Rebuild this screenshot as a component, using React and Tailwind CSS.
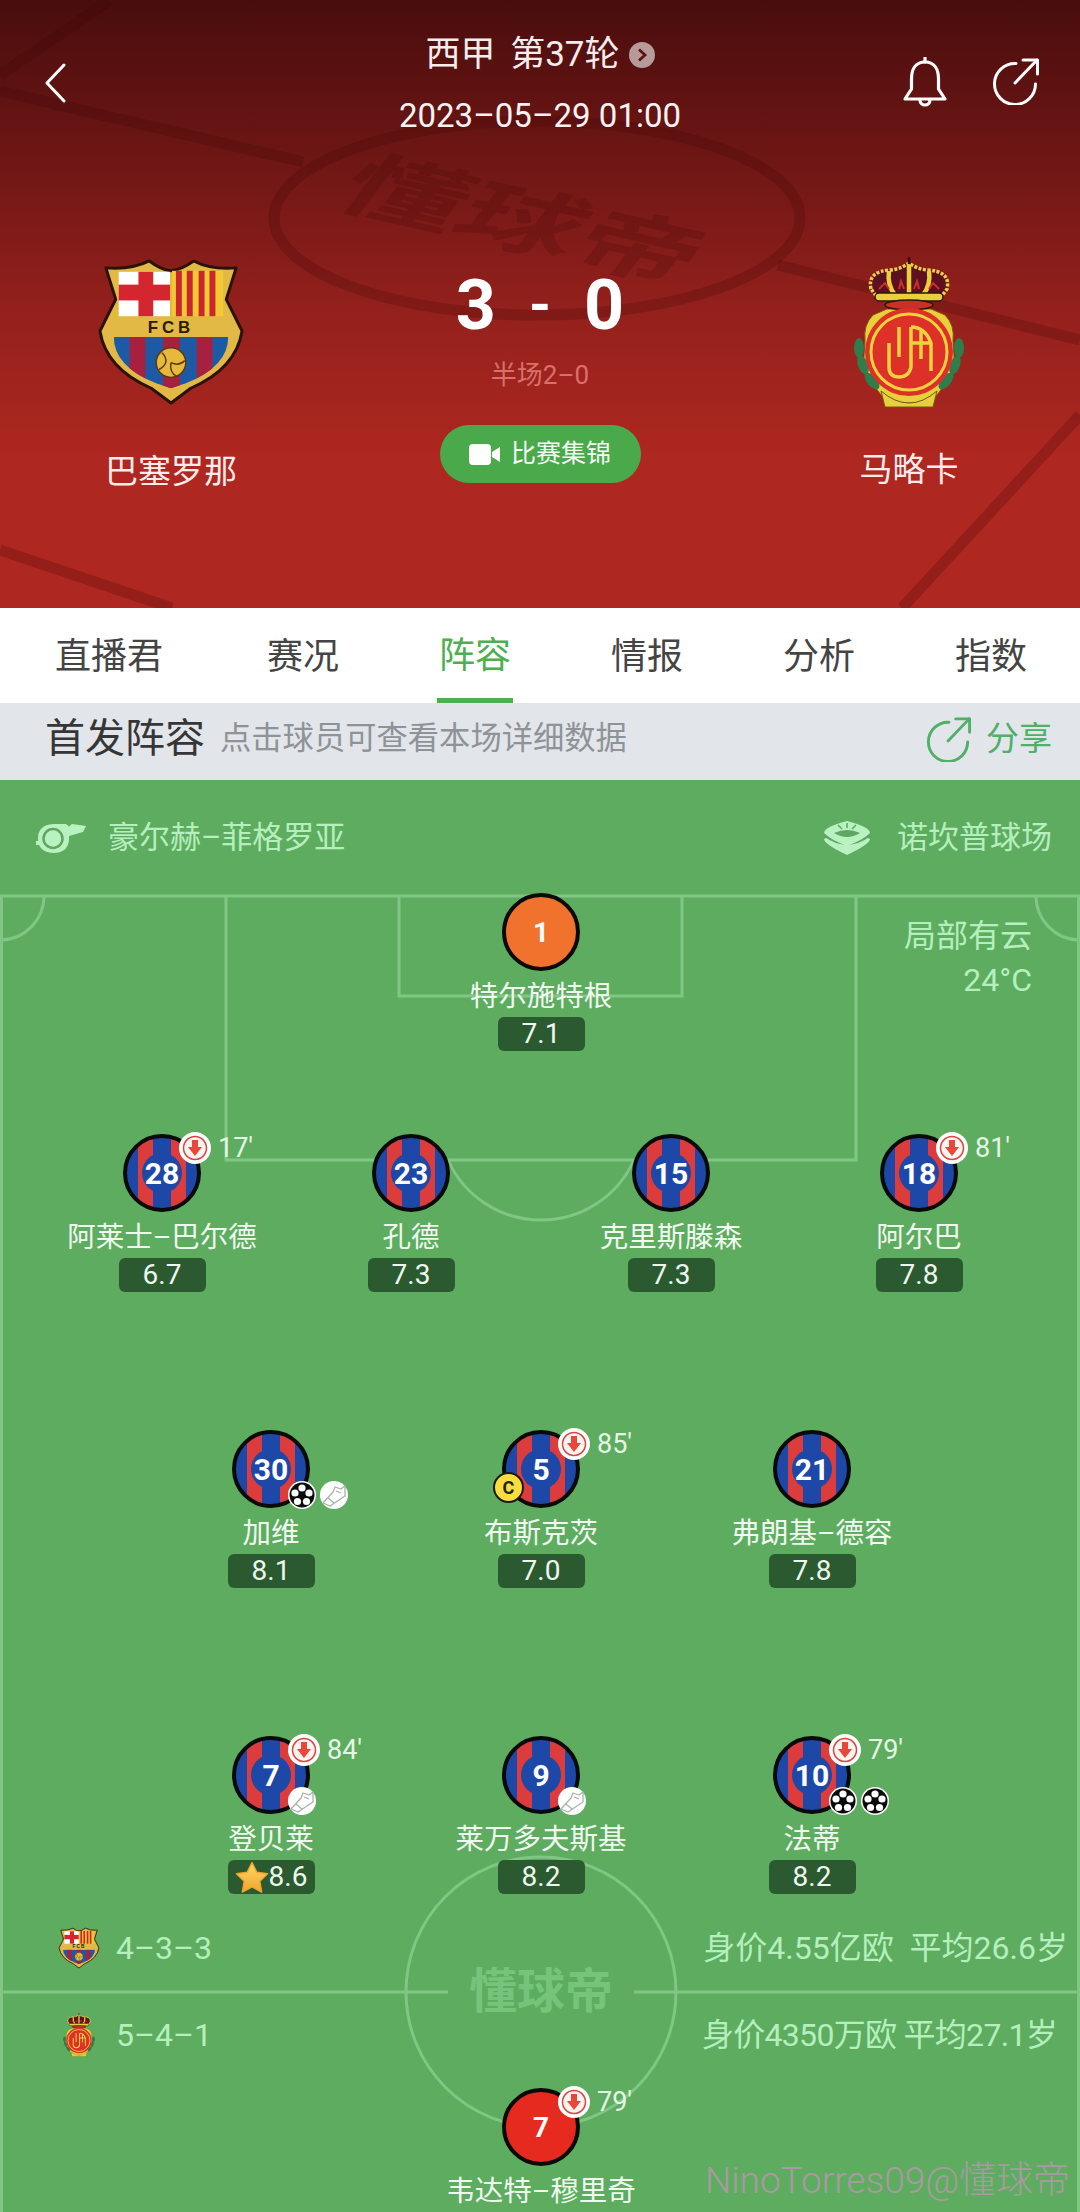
import React from "react";

function BarcaCrest({ className, id }) {
  return (
    <svg viewBox="14 17 152 151" className={className}>
      <defs>
        <clipPath id={id}>
          <path d="M32 98H148Q148 128 105 145L90 150L75 145Q32 128 32 98Z" />
        </clipPath>
      </defs>
      <path d="M24 28Q50 30 68 21Q80 30 90 31Q100 30 113 21Q130 30 156 28L146 60L162 92Q156 130 110 150L90 165L70 150Q24 130 18 92L34 60Z" fill="#e2b945" stroke="#2a1208" strokeWidth="3" strokeLinejoin="round" />
      <rect x="37" y="32" width="52" height="45" fill="#fff" />
      <rect x="57" y="32" width="15" height="45" fill="#d4262e" />
      <rect x="37" y="45" width="52" height="16" fill="#d4262e" />
      <rect x="91" y="31" width="52" height="46" fill="#f2c935" />
      <rect x="95" y="31" width="6" height="46" fill="#c9272e" />
      <rect x="106" y="31" width="6" height="46" fill="#c9272e" />
      <rect x="118" y="31" width="6" height="46" fill="#c9272e" />
      <rect x="129" y="31" width="6" height="46" fill="#c9272e" />
      <text x="90" y="94" textAnchor="middle" fontSize="17" fontWeight="700" fill="#2a1a08" letterSpacing="4" fontFamily="Liberation Sans, sans-serif">FCB</text>
      <g clipPath={`url(#${id})`}>
        <rect x="32" y="98" width="116" height="55" fill="#1d5aa6" />
        <rect x="48" y="98" width="16" height="55" fill="#a8203f" />
        <rect x="82" y="98" width="17" height="55" fill="#a8203f" />
        <rect x="116" y="98" width="16" height="55" fill="#a8203f" />
      </g>
      <circle cx="90" cy="124" r="15" fill="#e6b93c" stroke="#5b3a10" strokeWidth="1.5" />
      <path d="M81 114Q90 124 78 131M90 124Q98 128 104 122M90 124Q88 134 96 138" fill="none" stroke="#5b3a10" strokeWidth="1.5" />
    </svg>
  );
}

function MallorcaCrest({ className }) {
  return (
    <svg viewBox="22 14 116 152" className={className}>
      <path d="M36 98Q34 82 44 72L58 66H102L116 72Q126 82 124 98L126 128L102 160H58L34 128Z" fill="#e9cf3c" stroke="#7a5a12" strokeWidth="1" />
      <g fill="#2f7d4a">
        <ellipse cx="30" cy="105" rx="5" ry="10" />
        <ellipse cx="34" cy="122" rx="5" ry="10" transform="rotate(-20 34 122)" />
        <ellipse cx="43" cy="138" rx="5" ry="10" transform="rotate(-40 43 138)" />
        <ellipse cx="130" cy="105" rx="5" ry="10" />
        <ellipse cx="126" cy="122" rx="5" ry="10" transform="rotate(20 126 122)" />
        <ellipse cx="117" cy="138" rx="5" ry="10" transform="rotate(40 117 138)" />
      </g>
      <path d="M52 148Q80 172 108 148L104 164H56Z" fill="#e9cf3c" stroke="#6d5a12" strokeWidth="1" />
      <path d="M42 46Q38 28 62 27Q72 26 80 20Q88 26 98 27Q122 28 118 46L112 54H48Z" fill="#5c1020" stroke="#e8cf4c" strokeWidth="3.5" strokeDasharray="3 1.5" />
      <path d="M80 22V52M60 28Q58 42 66 52M100 28Q102 42 94 52" stroke="#e9cf3c" strokeWidth="4.5" fill="none" />
      <path d="M80 13V21" stroke="#3a0b10" strokeWidth="2.5" />
      <path d="M50 46L56 40L60 46M110 46L104 40L100 46M70 46L72 38L75 46M90 46L88 38L85 46" stroke="#c9302a" strokeWidth="2" fill="none" />
      <rect x="46" y="50" width="68" height="8" rx="4" fill="#e9cf3c" stroke="#2c1a08" strokeWidth="1.5" />
      <ellipse cx="80" cy="62" rx="24" ry="5" fill="#c9302a" stroke="#2c1a08" strokeWidth="1.5" />
      <circle cx="80" cy="109" r="44" fill="#dc3029" />
      <circle cx="80" cy="109" r="38" fill="none" stroke="#f0d23e" strokeWidth="3" />
      <path d="M60 100V124Q60 134 70 134T82 124V84M82 84Q96 84 102 100V128M70 84V114M92 88V116M82 100H102" fill="none" stroke="#f0d23e" strokeWidth="3.5" />
    </svg>
  );
}

function BackIcon() {
  return (
    <svg viewBox="0 0 21 40" className="w-[21px] h-[40px]" fill="none" stroke="#fff" strokeWidth="3" strokeLinecap="round" strokeLinejoin="round">
      <path d="M19 2L2 20L19 38" />
    </svg>
  );
}

function BellIcon() {
  return (
    <svg viewBox="0 0 46 50" className="w-[46px] h-[50px]" fill="none" stroke="#fff" strokeWidth="3.2" strokeLinejoin="round">
      <path d="M23 5C13 5 9.5 13 9.5 22V32L3 42H43L36.500 32V22C36.500 13 33 5 23 5Z" />
      <path d="M23 1V5" strokeLinecap="round" />
      <path d="M18 43A5 5 0 0 0 28 43" />
    </svg>
  );
}

function ShareIcon({ className, color }) {
  return (
    <svg viewBox="0 0 48 48" className={className} fill="none" stroke={color} strokeWidth="3" strokeLinecap="round" strokeLinejoin="round">
      <path d="M24 6.500A20.500 20.500 0 1 0 43.500 27" />
      <path d="M23 26L45 3" />
      <path d="M31 3H45.500V17" />
    </svg>
  );
}

function WhistleIcon() {
  return (
    <svg viewBox="0 0 50 32" className="w-[50px] h-[32px]">
      <path d="M17 2H30L33 4.500L36 2L50 4L47 10L33 14Q34 31 17 31Q2 30 2 16.500Q2 3 17 2Z" fill="#b9f2c1" />
      <rect x="0" y="19" width="4" height="4" fill="#b9f2c1" />
      <circle cx="17" cy="16.500" r="9.500" fill="#b9f2c1" stroke="#5fa662" strokeWidth="2.500" />
    </svg>
  );
}

function StadiumIcon() {
  return (
    <svg viewBox="0 0 48 36" className="w-[48px] h-[36px]">
      <path d="M1 19Q1 24 24 35Q47 24 47 19L40 16H8Z" fill="#b9f2c1" />
      <path d="M1 15Q24 32 47 15" fill="none" stroke="#5fa662" strokeWidth="2.500" />
      <path d="M24 1Q47 7 47 13Q40 20 24 26Q8 20 1 13Q1 7 24 1Z" fill="#b9f2c1" />
      <path d="M11 13Q24 7 37 13Q24 21 11 13Z" fill="#5fa662" />
      <path d="M15 5L19 9M24 3V8M33 5L29 9" stroke="#5fa662" strokeWidth="1.500" />
    </svg>
  );
}

function VideoIcon() {
  return (
    <svg viewBox="0 0 32 21" className="w-[32px] h-[21px]" fill="#fff">
      <rect x="0" y="0" width="22" height="21" rx="4" />
      <path d="M23 8L31 3V18L23 13Z" />
    </svg>
  );
}

function Jersey({ kind, num }) {
  const isBarca = kind === "barca";
  const fill = kind === "gk" ? "#f0722c" : kind === "red" ? "#e62a20" : "#1e48a8";
  return (
    <svg viewBox="0 0 78 78" className="w-[78px] h-[78px]">
      <defs>
        <clipPath id="jersey-clip">
          <circle cx="39" cy="39" r="37" />
        </clipPath>
      </defs>
      <circle cx="39" cy="39" r="37" fill={fill} />
      {isBarca && (
        <g clipPath="url(#jersey-clip)">
          <rect x="15" y="0" width="15" height="78" fill="#dc3c3c" />
          <rect x="48" y="0" width="15" height="78" fill="#dc3c3c" />
          <circle cx="39" cy="39" r="20" fill="#1e48a8" />
        </g>
      )}
      <circle cx="39" cy="39" r="37" fill="none" stroke="#0a0a0a" strokeWidth="4" />
      <text x="39" y="39" dy="0.36em" textAnchor="middle" fill="#fff" fontSize={isBarca ? 30 : 28} fontWeight="700" fontFamily="Roboto, sans-serif">{num}</text>
    </svg>
  );
}

function SubBadge() {
  return (
    <svg viewBox="0 0 32 32" className="w-[32px] h-[32px]">
      <circle cx="16" cy="16" r="16" fill="#fff" />
      <circle cx="16" cy="16" r="11.500" fill="#fdf4f2" stroke="#d9453a" strokeWidth="1.500" />
      <path d="M13 8H19V15H23L16 24L9 15H13Z" fill="#e8483a" />
    </svg>
  );
}

function BallBadge() {
  return (
    <svg viewBox="0 0 28 28" className="w-[28px] h-[28px]">
      <circle cx="14" cy="14" r="14" fill="#fff" />
      <circle cx="14" cy="14" r="12.500" fill="#0b0b0b" />
      <circle cx="14" cy="7" r="3.600" fill="#fff" />
      <circle cx="7" cy="12" r="3.600" fill="#fff" />
      <circle cx="21" cy="12" r="3.600" fill="#fff" />
      <circle cx="9.500" cy="20.500" r="3.600" fill="#fff" />
      <circle cx="18.500" cy="20.500" r="3.600" fill="#fff" />
    </svg>
  );
}

function BootBadge() {
  return (
    <svg viewBox="0 0 28 28" className="w-[28px] h-[28px]">
      <circle cx="14" cy="14" r="14" fill="#fff" />
      <path d="M3 22L13 11L15 6L21 8L25 5L25 15L10 25Z" fill="#fff" stroke="#a9b0ab" strokeWidth="1.300" strokeLinejoin="round" />
      <path d="M8 17L14 22M16 10L21 12" fill="none" stroke="#a9b0ab" strokeWidth="1.200" />
    </svg>
  );
}

function StarIcon() {
  return (
    <svg viewBox="0 0 34 32" className="w-[34px] h-[32px] shrink-0">
      <defs>
        <linearGradient id="star-fill" x1="0" y1="0" x2="0" y2="1">
          <stop offset="0" stopColor="#fcd96a" />
          <stop offset="1" stopColor="#f2a52c" />
        </linearGradient>
      </defs>
      <path d="M17 1.500L21.800 11.300L32.500 12.800L24.800 20.300L26.600 31L17 25.900L7.400 31L9.200 20.300L1.500 12.800L12.200 11.300Z" fill="url(#star-fill)" stroke="#f2a52c" strokeLinejoin="round" strokeWidth="1.500" />
    </svg>
  );
}

const players = [
  { pos: "left-[441px] top-[113px]", kind: "gk", num: 1, name: "特尔施特根", rating: "7.1" },
  { pos: "left-[62px] top-[354px]", kind: "barca", num: 28, name: "阿莱士–巴尔德", rating: "6.7", sub: "17′" },
  { pos: "left-[311px] top-[354px]", kind: "barca", num: 23, name: "孔德", rating: "7.3" },
  { pos: "left-[571px] top-[354px]", kind: "barca", num: 15, name: "克里斯滕森", rating: "7.3" },
  { pos: "left-[819px] top-[354px]", kind: "barca", num: 18, name: "阿尔巴", rating: "7.8", sub: "81′" },
  { pos: "left-[171px] top-[650px]", kind: "barca", num: 30, name: "加维", rating: "8.1", ball: 1, bootSecond: true },
  { pos: "left-[441px] top-[650px]", kind: "barca", num: 5, name: "布斯克茨", rating: "7.0", sub: "85′", captain: true },
  { pos: "left-[712px] top-[650px]", kind: "barca", num: 21, name: "弗朗基–德容", rating: "7.8" },
  { pos: "left-[171px] top-[956px]", kind: "barca", num: 7, name: "登贝莱", rating: "8.6", sub: "84′", boot: true, star: true },
  { pos: "left-[441px] top-[956px]", kind: "barca", num: 9, name: "莱万多夫斯基", rating: "8.2", boot: true },
  { pos: "left-[712px] top-[956px]", kind: "barca", num: 10, name: "法蒂", rating: "8.2", sub: "79′", ball: 2 },
  { pos: "left-[441px] top-[1308px]", kind: "red", num: 7, name: "韦达特–穆里奇", sub: "79′" },
];

function Player({ p }) {
  return (
    <div className={`absolute w-[200px] flex flex-col items-center ${p.pos}`}>
      <div className="relative w-[78px] h-[78px]">
        <Jersey kind={p.kind} num={p.num} />
        {p.sub && (
          <>
            <span className="absolute left-[56px] top-[-2px]"><SubBadge /></span>
            <span className="absolute left-[95px] top-[-4px] h-[36px] leading-[36px] text-[27px] text-[#e6f6e6] whitespace-nowrap">{p.sub}</span>
          </>
        )}
        {p.ball >= 1 && <span className="absolute left-[56px] top-[51px]"><BallBadge /></span>}
        {p.ball === 2 && <span className="absolute left-[88px] top-[51px]"><BallBadge /></span>}
        {p.boot && <span className="absolute left-[56px] top-[51px]"><BootBadge /></span>}
        {p.bootSecond && <span className="absolute left-[88px] top-[51px]"><BootBadge /></span>}
        {p.captain && (
          <span className="absolute left-[-9px] top-[42px] w-[31px] h-[31px] rounded-full bg-[#f7dd3e] border-2 border-[#1a1a1a] flex items-center justify-center text-[18px] font-bold text-[#222] leading-none">C</span>
        )}
      </div>
      <div className="mt-[6px] h-[40px] leading-[40px] text-[28.5px] text-[#f0f9f0] whitespace-nowrap">{p.name}</div>
      {p.rating && (
        <div className="w-[87px] h-[34px] rounded-[6px] bg-[#2b5a31] flex items-center justify-center text-[28px] leading-none text-[#eef7ee]">
          {p.star && <StarIcon />}
          <span>{p.rating}</span>
        </div>
      )}
    </div>
  );
}

function PitchLines() {
  return (
    <svg viewBox="0 0 1080 1432" className="absolute left-0 top-0 w-[1080px] h-[1432px]" fill="none" stroke="#80c685" strokeWidth="3">
      <path d="M1.500 1432V116H1078.500V1432" />
      <path d="M226 116V380H856V116" />
      <path d="M399 116V216H682V116" />
      <path d="M448 380A102 102 0 0 0 634 380" />
      <path d="M1.500 160A44 44 0 0 0 44 116" />
      <path d="M1078.500 160A44 44 0 0 1 1036 116" />
      <path d="M0 1212H448M634 1212H1080" />
      <circle cx="541" cy="1212" r="135" />
    </svg>
  );
}

function HeaderDecor() {
  return (
    <div className="absolute inset-0 overflow-hidden">
      <svg viewBox="0 0 1080 608" className="absolute left-0 top-0 w-[1080px] h-[608px]" fill="none" stroke="#3c0505" strokeOpacity="0.22" strokeWidth="11">
        <path d="M110 0L0 75" />
        <path d="M0 91L303 162" />
        <path d="M778 265L1080 340" />
        <path d="M1080 415L902 608" />
        <path d="M0 550L172 608" />
        <ellipse cx="537" cy="218" rx="263" ry="97" />
      </svg>
      <div className="absolute left-[312px] top-[152px] w-[420px] text-center text-[120px] leading-[140px] font-bold text-[#3c0505]/20 rotate-[13deg] scale-y-[0.62] skew-x-[-16deg] whitespace-nowrap">懂球帝</div>
    </div>
  );
}

const tabs = ["直播君", "赛况", "阵容", "情报", "分析", "指数"];

export default function App() {
  return (
    <div className="w-[1080px] h-[2212px] overflow-hidden bg-[#5eac60] font-['Roboto','Noto_Sans_CJK_SC',sans-serif]">
      <header className="relative h-[608px] bg-gradient-to-b from-[#490d0d] via-[#92201c] via-50% to-[#ae2720] to-75% text-white">
        <HeaderDecor />
        <div className="relative grid grid-cols-[1fr_auto_1fr] pt-[34px]">
          <div className="pl-[45px] pt-[29px]"><BackIcon /></div>
          <div className="flex flex-col items-center">
            <div className="flex items-center h-[42px] text-[35px] leading-[42px] text-[#f7ecec] [word-spacing:6px]">
              <span>西甲 第37轮</span>
              <span className="ml-[9px] w-[26px] h-[26px] rounded-full bg-[#b79a9a] flex items-center justify-center">
                <svg viewBox="0 0 12 14" className="w-[12px] h-[14px]" fill="none" stroke="#5c1313" strokeWidth="2.800"><path d="M3 1.500L9 7L3 12.500" /></svg>
              </span>
            </div>
            <div className="mt-[19px] h-[42px] text-[33px] leading-[42px] text-[#fbf3f3]">2023–05–29 01:00</div>
          </div>
          <div className="flex justify-end items-start gap-[44px] pr-[40px] pt-[23px]">
            <BellIcon />
            <ShareIcon className="w-[48px] h-[48px]" color="#fff" />
          </div>
        </div>
        <div className="relative grid grid-cols-[342px_396px_342px] mt-[99px]">
          <div className="flex flex-col items-center pt-[21px]">
            <BarcaCrest id="crest-a" className="w-[150px] h-[149px]" />
            <div className="mt-[44px] h-[44px] text-[33px] leading-[44px] text-[#fbecec]">巴塞罗那</div>
          </div>
          <div className="flex flex-col items-center">
            <div className="mt-[24px] h-[90px] flex items-center gap-[33px] text-[70px] leading-[90px] font-bold">
              <span>3</span>
              <span className="text-[56px]">-</span>
              <span>0</span>
            </div>
            <div className="mt-[7px] h-[36px] text-[26px] leading-[36px] text-[#d8716a]">半场2–0</div>
            <div className="mt-[32px] w-[201px] h-[58px] rounded-full bg-[#4aa94a] flex items-center justify-center gap-[10px] text-[25px] text-[#f6fbf6]">
              <VideoIcon />
              <span>比赛集锦</span>
            </div>
          </div>
          <div className="flex flex-col items-center pt-[21px]">
            <MallorcaCrest className="w-[116px] h-[152px]" />
            <div className="mt-[39px] h-[44px] text-[33px] leading-[44px] text-[#fbecec]">马略卡</div>
          </div>
        </div>
      </header>

      <nav className="h-[95px] bg-white flex pl-[55px] text-[36px] text-[#444]">
        {tabs.map((t, i) => (
          <div
            key={t}
            className={
              i === 2
                ? "shrink-0 whitespace-nowrap h-full flex items-center -ml-[2px] px-[2px] mr-[98px] text-[#4caf50] border-b-[5px] border-[#4caf50] pt-[6px]"
                : i === 0
                ? "shrink-0 whitespace-nowrap h-full flex items-center mr-[104px] pt-[3px]"
                : "shrink-0 whitespace-nowrap h-full flex items-center mr-[100px] pt-[3px]"
            }
          >
            {t}
          </div>
        ))}
      </nav>

      <div className="h-[77px] bg-[#e2e5e9] flex items-center pl-[45px] pr-[28px] pb-[6px]">
        <span className="text-[40px] leading-none text-[#363636]">首发阵容</span>
        <span className="ml-[15px] text-[31.3px] leading-none text-[#8e9398]">点击球员可查看本场详细数据</span>
        <span className="ml-auto flex items-center gap-[14px] text-[33px] leading-none text-[#4fb069]">
          <ShareIcon className="w-[46px] h-[46px]" color="#4fb069" />
          <span>分享</span>
        </span>
      </div>

      <main className="relative h-[1432px] overflow-hidden text-[#b6efbe]">
        <PitchLines />
        <div className="relative h-[116px] flex items-center justify-between pl-[36px] pr-[28px] text-[31px]">
          <div className="flex items-center gap-[22px]">
            <WhistleIcon />
            <span>豪尔赫–菲格罗亚</span>
          </div>
          <div className="flex items-center gap-[26px]">
            <StadiumIcon />
            <span>诺坎普球场</span>
          </div>
        </div>
        <div className="relative pr-[48px] pt-[18px] flex flex-col items-end text-[32px] leading-[44px]">
          <span>局部有云</span>
          <span>24°C</span>
        </div>
        <div className="relative mt-[924px] pl-[58px] pr-[12px] flex items-center h-[44px] text-[32px]">
          <BarcaCrest id="crest-b" className="w-[42px] h-[42px]" />
          <span className="ml-[16px]">4–3–3</span>
          <span className="ml-auto whitespace-pre">身价4.55亿欧  平均26.6岁</span>
        </div>
        <div className="relative mt-[43px] pl-[62px] pr-[23px] flex items-center h-[44px] text-[32px]">
          <MallorcaCrest className="w-[34px] h-[44px]" />
          <span className="ml-[20px]">5–4–1</span>
          <span className="ml-auto whitespace-pre tracking-[-0.7px]">身价4350万欧 平均27.1岁</span>
        </div>
        <div className="absolute left-[441px] top-[1182px] w-[200px] text-center text-[48px] leading-[60px] font-bold text-[#76c47b]">懂球帝</div>
        {players.map((p) => (
          <Player key={p.name} p={p} />
        ))}
        <div className="absolute right-[10px] top-[1376px] text-[37px] leading-[50px] font-light text-[#a99aa2] whitespace-nowrap">NinoTorres09@懂球帝</div>
      </main>
    </div>
  );
}
